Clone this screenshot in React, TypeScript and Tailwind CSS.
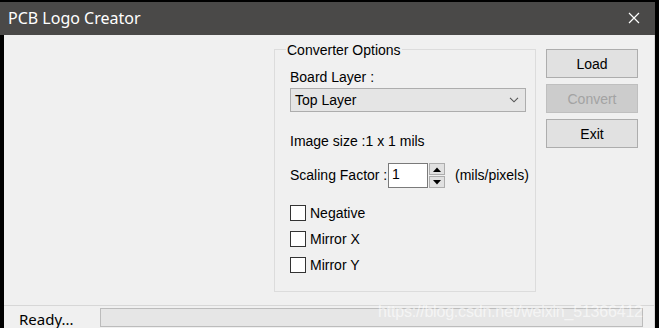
const ui = { fontFamily: '"Liberation Sans", Arial, sans-serif' };
const seg = { fontFamily: '"Noto Sans", "Open Sans", sans-serif' };

function CheckRow({ label, className }: { label: string; className?: string }) {
  return (
    <div className={`flex items-center h-[16px] ${className ?? ''}`}>
      <div className="w-[16px] h-[16px] border border-[#333333] bg-white" />
      <span className="ml-[4px] text-[14px] leading-[16px] text-black">{label}</span>
    </div>
  );
}

function WinButton({ label, disabled, className }: { label: string; disabled?: boolean; className?: string }) {
  return (
    <div
      className={`h-[29px] w-[92px] flex items-center justify-center pt-[2px] text-[14px] border ${
        disabled
          ? 'bg-[#cccccc] border-[#bfbfbf] text-[#a3a3a3]'
          : 'bg-[#e1e1e1] border-[#adadad] text-black'
      } ${className ?? ''}`}
    >
      {label}
    </div>
  );
}

export default function App() {
  return (
    <div className="w-[659px] h-[328px] bg-black flex flex-col overflow-hidden relative" style={ui}>
      {/* title bar */}
      <div className="w-[655px] h-[35px] bg-[#4a4948] border-t-2 border-black flex items-center justify-between pl-[8px] pr-[15px]">
        <span className="text-white text-[16px] leading-[20px] pb-[1px]" style={seg}>
          PCB Logo Creator
        </span>
        <svg width="12" height="12" viewBox="0 0 12 12" className="-mt-[2px]">
          <path d="M1 1 L11 11 M11 1 L1 11" stroke="#ffffff" strokeWidth="1.2" />
        </svg>
      </div>

      {/* client */}
      <div className="ml-[4px] w-[651px] flex-1 bg-[#f0f0f0] border-r border-[#d8d8d8] flex flex-col">
        <div className="flex-1 flex pl-[270px] pt-[14px]">
          {/* group box */}
          <div className="w-[262px] h-[243px] border border-[#dcdcdc] pl-[15px] pr-[9px]">
            <div className="-mt-[7px] -ml-[4px] w-fit px-[1px] bg-[#f0f0f0] text-[14px] leading-[15px] text-black">
              Converter Options
            </div>
            <div className="mt-[12px] text-[14px] leading-[15px] text-black">Board Layer :</div>
            <div className="mt-[3px] h-[24px] w-[236px] bg-[#e5e5e5] border border-[#adadad] flex items-center justify-between pl-[4px] pr-[6px]">
              <span className="text-[14px] text-black">Top Layer</span>
              <svg width="10" height="6" viewBox="0 0 10 6">
                <path d="M1 0.8 L5 4.8 L9 0.8" fill="none" stroke="#555555" strokeWidth="1.1" />
              </svg>
            </div>
            <div className="mt-[22px] text-[14px] leading-[15px] text-black">Image size :1 x 1 mils</div>
            <div className="mt-[14px] flex items-center h-[25px]">
              <span className="text-[14px] text-black w-[98px] shrink-0 whitespace-nowrap">Scaling Factor :</span>
              <div className="w-[40px] h-[25px] shrink-0 bg-white border border-[#7a7a7a] pl-[3px] text-[14px] leading-[20px] text-black">
                1
              </div>
              <div className="ml-[1px] flex flex-col gap-[1px]">
                <div className="w-[16px] h-[12px] bg-[#e1e1e1] border border-[#adadad] flex items-center justify-center">
                  <svg width="8" height="5" viewBox="0 0 8 5">
                    <path d="M0 5 L4 0.5 L8 5 Z" fill="#000" />
                  </svg>
                </div>
                <div className="w-[16px] h-[12px] bg-[#e1e1e1] border border-[#adadad] flex items-center justify-center">
                  <svg width="8" height="5" viewBox="0 0 8 5">
                    <path d="M0 0 L4 4.5 L8 0 Z" fill="#000" />
                  </svg>
                </div>
              </div>
              <span className="ml-[10px] text-[14px] text-black whitespace-nowrap">(mils/pixels)</span>
            </div>
            <CheckRow label="Negative" className="mt-[17px]" />
            <CheckRow label="Mirror X" className="mt-[10px]" />
            <CheckRow label="Mirror Y" className="mt-[10px]" />
          </div>

          {/* buttons */}
          <div className="ml-[10px] flex flex-col gap-[6px]">
            <WinButton label="Load" />
            <WinButton label="Convert" disabled />
            <WinButton label="Exit" />
          </div>
        </div>

        {/* status bar */}
        <div className="h-[23px] border-t border-[#d7d7d7] flex items-center">
          <span className="ml-[15px] w-[81px] text-[15px] text-black leading-[20px] pt-[3px]" style={seg}>
            Ready...
          </span>
          <div className="h-[19px] w-[543px] bg-[#e6e6e6] border border-[#bcbcbc] mt-[1px]" />
        </div>
      </div>

      <span
        className="absolute left-[378px] top-[302px] text-[16px] leading-[20px] text-white/60 tracking-[-0.2px]"
        style={ui}
      >
        https://blog.csdn.net/weixin_51366412
      </span>
    </div>
  );
}
